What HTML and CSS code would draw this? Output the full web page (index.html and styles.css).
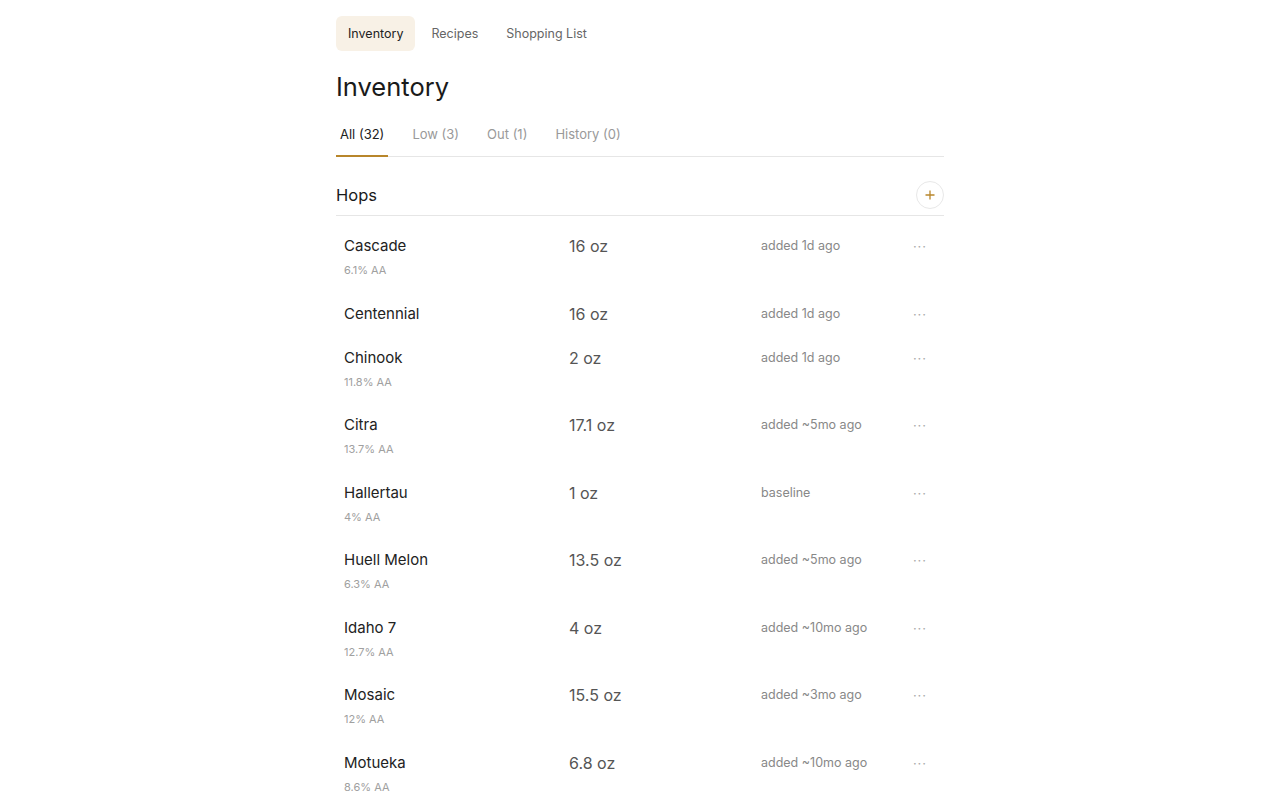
FILE: index.html
```html
<!DOCTYPE html>
<html lang="en">
<head>
<meta charset="utf-8">
<title>Inventory</title>
<link rel="stylesheet" href="styles.css">
</head>
<body>
<div class="page">
  <nav class="topnav">
    <a class="navtab active">Inventory</a>
    <a class="navtab">Recipes</a>
    <a class="navtab">Shopping List</a>
  </nav>
  <h1 class="title">Inventory</h1>
  <div class="subtabs">
    <span class="subtab active">All (32)</span>
    <span class="subtab">Low (3)</span>
    <span class="subtab">Out (1)</span>
    <span class="subtab">History (0)</span>
  </div>
  <section class="group">
    <div class="group-head">
      <h2 class="group-title">Hops</h2>
      <button class="add-btn" aria-label="Add">
        <svg width="12" height="12" viewBox="0 0 12 12"><path d="M6 1.5v9M1.5 6h9" stroke="#b8862b" stroke-width="1.3" fill="none"/></svg>
      </button>
    </div>
    <ul class="items">
      <li class="item"><div class="name-col"><div class="name">Cascade</div><div class="sub">6.1% AA</div></div><div class="qty">16 oz</div><div class="date">added 1d ago</div><div class="more">···</div></li>
      <li class="item"><div class="name-col"><div class="name">Centennial</div></div><div class="qty">16 oz</div><div class="date">added 1d ago</div><div class="more">···</div></li>
      <li class="item"><div class="name-col"><div class="name">Chinook</div><div class="sub">11.8% AA</div></div><div class="qty">2 oz</div><div class="date">added 1d ago</div><div class="more">···</div></li>
      <li class="item"><div class="name-col"><div class="name">Citra</div><div class="sub">13.7% AA</div></div><div class="qty">17.1 oz</div><div class="date">added ~5mo ago</div><div class="more">···</div></li>
      <li class="item"><div class="name-col"><div class="name">Hallertau</div><div class="sub">4% AA</div></div><div class="qty">1 oz</div><div class="date">baseline</div><div class="more">···</div></li>
      <li class="item"><div class="name-col"><div class="name">Huell Melon</div><div class="sub">6.3% AA</div></div><div class="qty">13.5 oz</div><div class="date">added ~5mo ago</div><div class="more">···</div></li>
      <li class="item"><div class="name-col"><div class="name">Idaho 7</div><div class="sub">12.7% AA</div></div><div class="qty">4 oz</div><div class="date">added ~10mo ago</div><div class="more">···</div></li>
      <li class="item"><div class="name-col"><div class="name">Mosaic</div><div class="sub">12% AA</div></div><div class="qty">15.5 oz</div><div class="date">added ~3mo ago</div><div class="more">···</div></li>
      <li class="item"><div class="name-col"><div class="name">Motueka</div><div class="sub">8.6% AA</div></div><div class="qty">6.8 oz</div><div class="date">added ~10mo ago</div><div class="more">···</div></li>
    </ul>
  </section>
</div>
</body>
</html>
```

FILE: styles.css
```css
* { box-sizing: border-box; }
html, body { margin: 0; padding: 0; background: #fff; }
body {
  font-family: Inter, "Liberation Sans", sans-serif;
  color: #222;
  -webkit-font-smoothing: antialiased;
}
.page {
  width: 608px;
  margin: 0 auto;
  padding-top: 16px;
}
.topnav {
  display: flex;
  gap: 4px;
}
.navtab {
  display: block;
  height: 35px;
  line-height: 35px;
  padding: 0 12px;
  border-radius: 6px;
  font-size: 12.5px;
  color: #666;
  cursor: pointer;
}
.navtab.active {
  background: #f8f1e6;
  color: #222;
}
.title {
  margin: 19px 0 0;
  font-size: 25.5px;
  line-height: 34px;
  font-weight: 400;
  color: #1a1a1a;
}
.subtabs {
  display: flex;
  gap: 20px;
  margin-top: 16px;
  border-bottom: 1px solid #e6e6e6;
}
.subtab {
  padding: 4px 4px 11px;
  font-size: 13px;
  line-height: 20px;
  color: #999;
  border-bottom: 2px solid transparent;
  margin-bottom: -1px;
}
.subtab.active {
  color: #222;
  border-bottom-color: #b8862b;
}
.group { margin-top: 24px; }
.group-head {
  display: flex;
  align-items: center;
  justify-content: space-between;
  padding-bottom: 6px;
  border-bottom: 1px solid #e6e6e6;
}
.group-title {
  margin: 0;
  font-size: 16.5px;
  font-weight: 400;
  color: #1a1a1a;
}
.add-btn {
  width: 28px;
  height: 28px;
  border-radius: 50%;
  border: 1px solid #e8e8e8;
  background: #fff;
  display: flex;
  align-items: center;
  justify-content: center;
  padding: 0;
}
.items {
  list-style: none;
  margin: 0;
  padding: 8px 0 0;
}
.item {
  display: grid;
  grid-template-columns: 225px 192px 1fr 24px;
  align-items: start;
  padding: 12px 12px 12px 8px;
}
.name {
  font-size: 15px;
  line-height: 20px;
  color: #222;
}
.sub {
  margin-top: 5px;
  font-size: 11px;
  line-height: 18.5px;
  color: #a0a0a0;
}
.qty {
  font-size: 16px;
  line-height: 20px;
  color: #555;
}
.date {
  font-size: 12.5px;
  line-height: 20px;
  color: #888;
}
.more {
  font-size: 13px;
  line-height: 20px;
  color: #aaa;
  text-align: center;
  letter-spacing: 1px;
}
```
